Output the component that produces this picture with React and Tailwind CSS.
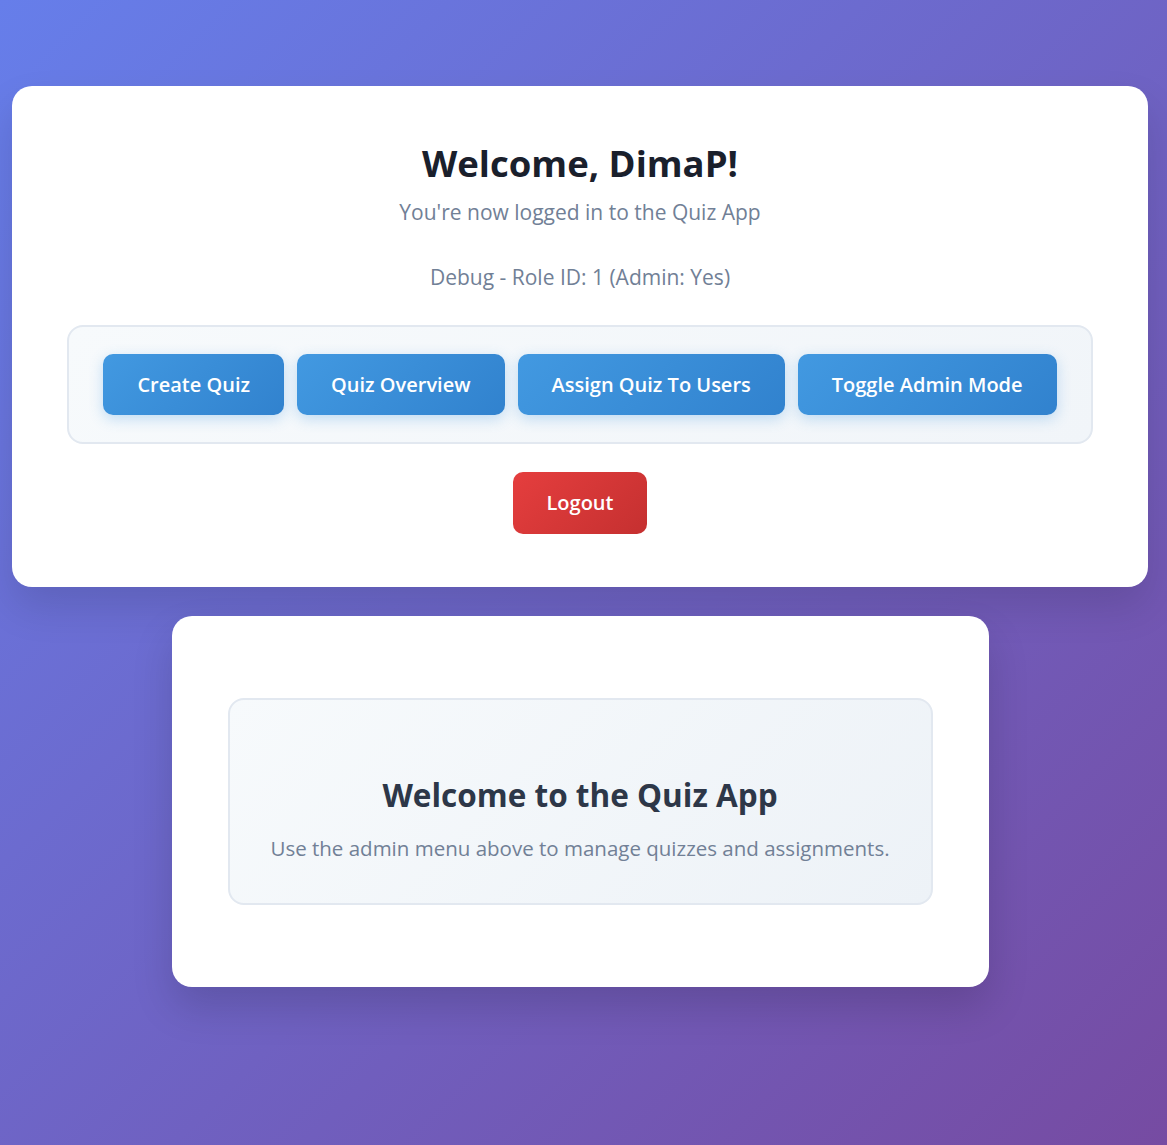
export default function App() {
  const actions = ["Create Quiz", "Quiz Overview", "Assign Quiz To Users", "Toggle Admin Mode"];

  return (
    <div
      className="min-h-screen bg-[linear-gradient(135deg,#667eea_0%,#764ba2_100%)] pt-[86px] pl-[12px] pr-[19px] pb-10"
      style={{ fontFamily: "'Open Sans', 'Noto Sans', sans-serif" }}
    >
      {/* Header card */}
      <div className="w-full bg-white rounded-[20px] shadow-[0_20px_40px_rgba(0,0,0,0.12)] pt-[55px] pb-[53px] px-[55px] flex flex-col items-center text-center">
        <h1 className="text-[36.5px] leading-[44px] font-bold text-[#1a202c]">Welcome, DimaP!</h1>
        <p className="mt-[13px] text-[21px] leading-[28px] text-[#718096]">You're now logged in to the Quiz App</p>
        <p className="mt-[37px] text-[21px] leading-[28px] text-[#718096]">Debug - Role ID: 1 (Admin: Yes)</p>

        <div className="mt-[34px] w-full border-2 border-[#e2e8f0] rounded-[16px] bg-[linear-gradient(135deg,#f7fafc,#f1f5f9)] py-[27px] px-[16px] flex flex-nowrap justify-center gap-[13px]">
          {actions.map((label) => (
            <button
              key={label}
              type="button"
              className="shrink-0 whitespace-nowrap h-[61px] px-[34px] rounded-[10px] bg-[linear-gradient(135deg,#4299e1,#3182ce)] text-white text-[20px] font-semibold shadow-[0_4px_14px_rgba(66,153,225,0.3)]"
            >
              {label}
            </button>
          ))}
        </div>

        <button
          type="button"
          className="mt-[28px] h-[62px] px-[34px] rounded-[10px] bg-[linear-gradient(135deg,#e53e3e,#c53030)] text-white text-[20px] font-semibold"
        >
          Logout
        </button>
      </div>

      {/* Content card */}
      <div className="mt-[29px] w-[817px] mx-auto bg-white rounded-[20px] shadow-[0_20px_40px_rgba(0,0,0,0.15)] px-[56px] py-[82px]">
        <div className="border-2 border-[#e2e8f0] rounded-[16px] bg-[linear-gradient(135deg,#f7fafc,#edf2f7)] pt-[75px] pb-[41px] px-6 text-center">
          <h2 className="text-[31.5px] leading-[40px] font-bold text-[#2d3748]">Welcome to the Quiz App</h2>
          <p className="mt-[19px] text-[20.5px] leading-[28px] text-[#718096]">
            Use the admin menu above to manage quizzes and assignments.
          </p>
        </div>
      </div>
    </div>
  );
}
